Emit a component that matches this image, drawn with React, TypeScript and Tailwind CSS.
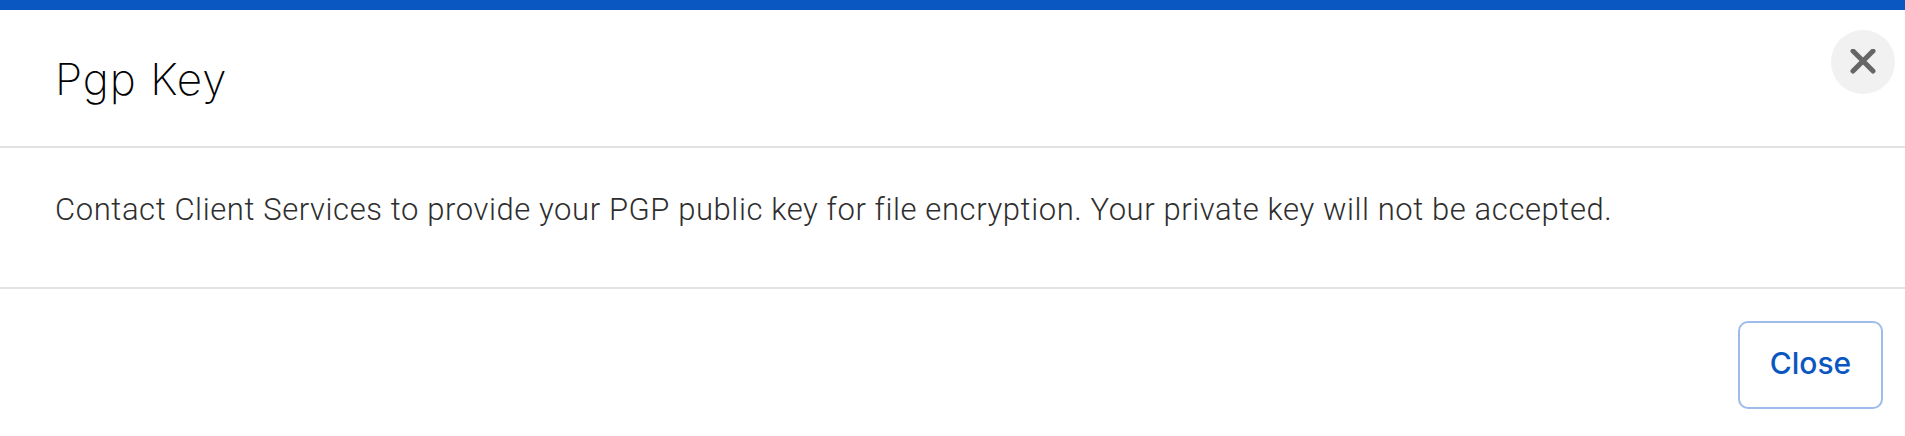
import { useState } from 'react';

interface ModalProps {
  title: string;
  message: string;
  onClose: () => void;
}

function CloseIcon() {
  return (
    <svg className="w-[26px] h-[26px]" viewBox="0 0 26 26" fill="none" aria-hidden="true">
      <path d="M3 2L23 22M23 2L3 22" stroke="#666666" strokeWidth="5" strokeLinecap="round" />
    </svg>
  );
}

function Modal({ title, message, onClose }: ModalProps) {
  return (
    <div
      role="dialog"
      aria-label={title}
      className="flex flex-col w-full h-[436px] bg-white border-t-10 border-[#0b57c2] font-['Inter',sans-serif]"
    >
      {/* Header */}
      <div className="flex items-start justify-between h-[138px] pl-[55px] pr-[10px] pt-5 border-b-2 border-[#e2e2e2]">
        <h2 className="mt-[19px] text-[44px] leading-[60px] tracking-[0.95px] font-extralight text-black whitespace-nowrap">
          {title}
        </h2>
        <button
          type="button"
          aria-label="Close dialog"
          onClick={onClose}
          className="flex items-center justify-center size-16 rounded-full bg-[#f1f1f1]"
        >
          <CloseIcon />
        </button>
      </div>

      {/* Body */}
      <div className="h-[141px] pl-[55px] pt-[40px] border-b-2 border-[#e2e2e2]">
        <p className="font-['Roboto',sans-serif] font-light text-[31px] leading-[44px] tracking-[0.59px] text-[#2e2e2e] whitespace-nowrap">
          {message}
        </p>
      </div>

      {/* Footer */}
      <div className="flex justify-end pt-8 pr-[22px]">
        <button
          type="button"
          onClick={onClose}
          className="w-[145px] h-[88px] pb-1 rounded-[10px] border-2 border-[#9dbce9] bg-white text-[30px] font-medium text-[#0b57c2]"
        >
          Close
        </button>
      </div>
    </div>
  );
}

export default function App() {
  const [open, setOpen] = useState(true);

  if (!open) return null;

  return (
    <Modal
      title="Pgp Key"
      message="Contact Client Services to provide your PGP public key for file encryption. Your private key will not be accepted."
      onClose={() => setOpen(false)}
    />
  );
}
